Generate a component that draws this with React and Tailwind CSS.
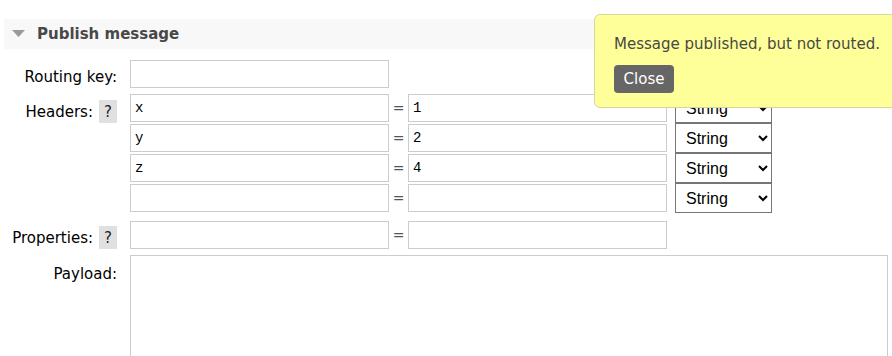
import React from "react";

const font = { fontFamily: '"DejaVu Sans", Verdana, sans-serif' };

function Input({ value = "", className = "" }) {
  return (
    <input
      readOnly
      value={value}
      className={`h-[28px] border border-[#cccccc] bg-white px-[4px] text-[14px] text-black [font-family:'Liberation_Mono',monospace] outline-none ${className}`}
    />
  );
}

function Select() {
  return (
    <select
      defaultValue="String"
      className="h-[30px] w-[97px] border border-[#767676] bg-white pl-[6px] text-[16px] text-black [font-family:'Liberation_Sans',Arial,sans-serif]"
    >
      <option>String</option>
      <option>Number</option>
      <option>Boolean</option>
    </select>
  );
}

function HelpBox() {
  return (
    <span className="ml-[6px] inline-flex h-[23px] w-[18px] items-center justify-center bg-[#e0e0e0] text-[15px] text-[#222]">
      ?
    </span>
  );
}

function HeaderRow({ k = "", v = "" }) {
  return (
    <div className="flex h-[30px] items-center">
      <Input value={k} className="w-[259px]" />
      <div className="flex h-[28px] w-[19px] items-center justify-center text-[14px] text-[#555]">=</div>
      <Input value={v} className="w-[259px]" />
      <div className="w-[8px]" />
      <Select />
    </div>
  );
}

export default function App() {
  return (
    <div className="relative h-[356px] w-[892px] overflow-hidden bg-white text-[#222]" style={font}>
      <div className="ml-[4px] mt-[19px] flex h-[30px] items-center bg-[#f8f8f8]">
        <svg width="13" height="8" viewBox="0 0 13 8" className="ml-[8px]">
          <polygon points="0,0 13,0 6.5,7" fill="#9a9a9a" />
        </svg>
        <span className="ml-[12px] text-[15px] font-bold text-[#484848]">Publish message</span>
      </div>

      <div className="mt-[11px] flex flex-col text-[15px] leading-[20px]">
        <div className="flex items-start">
          <div className="w-[117px] pt-[7px] text-right text-black">Routing key:</div>
          <div className="ml-[13px]">
            <Input className="w-[259px]" />
          </div>
        </div>

        <div className="mt-[5px] flex items-start">
          <div className="flex w-[117px] items-center justify-end pt-[7px] text-black">
            <span>Headers:</span>
            <HelpBox />
          </div>
          <div className="ml-[13px] flex flex-col">
            <HeaderRow k="x" v="1" />
            <HeaderRow k="y" v="2" />
            <HeaderRow k="z" v="4" />
            <HeaderRow />
          </div>
        </div>

        <div className="mt-[8px] flex items-start">
          <div className="flex w-[117px] items-center justify-end pt-[5px] text-black">
            <span>Properties:</span>
            <HelpBox />
          </div>
          <div className="ml-[13px] flex items-start">
            <Input className="w-[259px]" />
            <div className="flex h-[28px] w-[19px] items-center justify-center text-[14px] text-[#555]">=</div>
            <Input className="w-[259px]" />
          </div>
        </div>

        <div className="mt-[6px] flex items-start">
          <div className="w-[117px] pt-[9px] text-right text-black">Payload:</div>
          <textarea
            readOnly
            className="ml-[13px] h-[140px] w-[758px] resize-none border border-[#cccccc] bg-white outline-none"
          />
        </div>
      </div>

      <div className="absolute left-[594px] top-[14px] h-[94px] w-[310px] rounded-[6px] border border-[#d6d6a0] bg-[#ffff99] px-[19px] pt-[19px]">
        <div className="text-[15px] leading-[20px] text-[#484848]">Message published, but not routed.</div>
        <button className="mt-[11px] flex h-[28px] w-[60px] items-center justify-center rounded-[4px] bg-[#666666] text-[15px] text-white">
          Close
        </button>
      </div>
    </div>
  );
}
